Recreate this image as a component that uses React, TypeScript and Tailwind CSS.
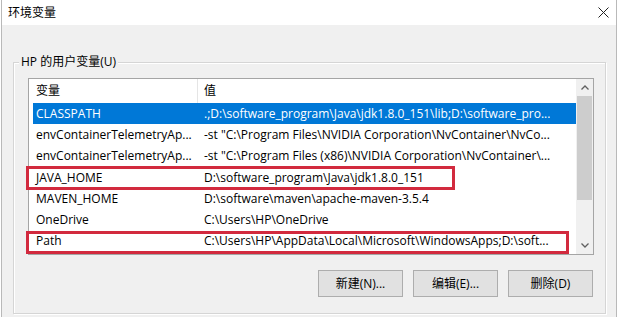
const rows = [
  { name: "CLASSPATH", value: ".;D:\\software_program\\Java\\jdk1.8.0_151\\lib;D:\\software_pro...", selected: true },
  { name: "envContainerTelemetryAp...", value: "-st \"C:\\Program Files\\NVIDIA Corporation\\NvContainer\\NvCo..." },
  { name: "envContainerTelemetryAp...", value: "-st \"C:\\Program Files (x86)\\NVIDIA Corporation\\NvContainer\\..." },
  { name: "JAVA_HOME", value: "D:\\software_program\\Java\\jdk1.8.0_151" },
  { name: "MAVEN_HOME", value: "D:\\software\\maven\\apache-maven-3.5.4" },
  { name: "OneDrive", value: "C:\\Users\\HP\\OneDrive" },
  { name: "Path", value: "C:\\Users\\HP\\AppData\\Local\\Microsoft\\WindowsApps;D:\\soft..." },
];

const font = "font-['Segoe_UI','Open_Sans','Noto_Sans_CJK_SC',sans-serif]";

const App = () => {
  return (
    <div className={`w-[620px] h-[317px] bg-white overflow-hidden text-[12px] text-black ${font}`}>
      <div className="ml-[1px] w-[616px] h-[317px] border-x border-[#b9b9b9] bg-[#f0f0f0] flex flex-col">
        {/* Title bar */}
        <div className="h-[25px] bg-white flex items-center justify-between pl-[6px] pr-[6px]">
          <span className="text-[12px] leading-none">环境变量</span>
          <svg width="11" height="11" viewBox="0 0 11 11" className="mr-[1px]">
            <path d="M0.5 0.5 L10.5 10.5 M10.5 0.5 L0.5 10.5" stroke="#222" strokeWidth="1" />
          </svg>
        </div>

        {/* Group box */}
        <div className="relative mt-[37px] ml-[11px] w-[593px] h-[252px] border border-[#d5d5d5] shadow-[inset_1px_1px_0_#fff,1px_1px_0_#fff]">
          <span className="absolute -top-[9px] left-[5px] px-[2px] bg-[#f0f0f0] leading-[16px]">
            HP 的用户变量(U)
          </span>

          {/* List */}
          <div className="relative mt-[15px] ml-[14px] w-[566px] h-[177px] border border-[#a5a5a5] bg-white flex">
            <div className="flex-1 pl-[4px] overflow-hidden">
              <div className="h-[24px] flex items-center">
                <div className="w-[165px] pl-[3px] h-full flex items-center border-r border-[#e5e5e5]">变量</div>
                <div className="pl-[6px]">值</div>
              </div>
              {rows.map((r, i) => (
                <div
                  key={i}
                  className={`h-[21.3px] flex items-center whitespace-nowrap ${
                    r.selected ? "bg-[#0078d7] text-white" : ""
                  }`}
                >
                  <div className="w-[168px] pl-[3px] overflow-hidden">{r.name}</div>
                  <div className="pl-[3px] overflow-hidden">{r.value}</div>
                </div>
              ))}
            </div>

            {/* Scrollbar */}
            <div className="w-[17px] bg-[#f0f0f0] flex flex-col items-center">
              <div className="h-[17px] flex items-center justify-center">
                <svg width="8" height="5" viewBox="0 0 8 5">
                  <path d="M0.5 4.5 L4 1 L7.5 4.5" stroke="#606060" strokeWidth="1.3" fill="none" />
                </svg>
              </div>
              <div className="w-[15px] h-[104px] bg-[#cdcdcd]" />
              <div className="flex-1" />
              <div className="h-[17px] flex items-center justify-center">
                <svg width="8" height="5" viewBox="0 0 8 5">
                  <path d="M0.5 0.5 L4 4 L7.5 0.5" stroke="#606060" strokeWidth="1.3" fill="none" />
                </svg>
              </div>
            </div>

            {/* Red annotation boxes */}
            <div className="absolute left-[-3px] top-[87px] w-[429px] h-[24px] border-[3px] border-[#d22a3e]" />
            <div className="absolute left-[-3px] top-[152px] w-[543px] h-[23px] border-[3px] border-[#d22a3e]" />
          </div>

          {/* Buttons */}
          <div className="mt-[15px] mr-[12px] flex justify-end gap-[10px]">
            {["新建(N)...", "编辑(E)...", "删除(D)"].map((b) => (
              <div
                key={b}
                className="w-[85px] h-[27px] bg-[#e1e1e1] border border-[#adadad] flex items-center justify-center"
              >
                {b}
              </div>
            ))}
          </div>
        </div>
      </div>
    </div>
  );
};

export default App;
